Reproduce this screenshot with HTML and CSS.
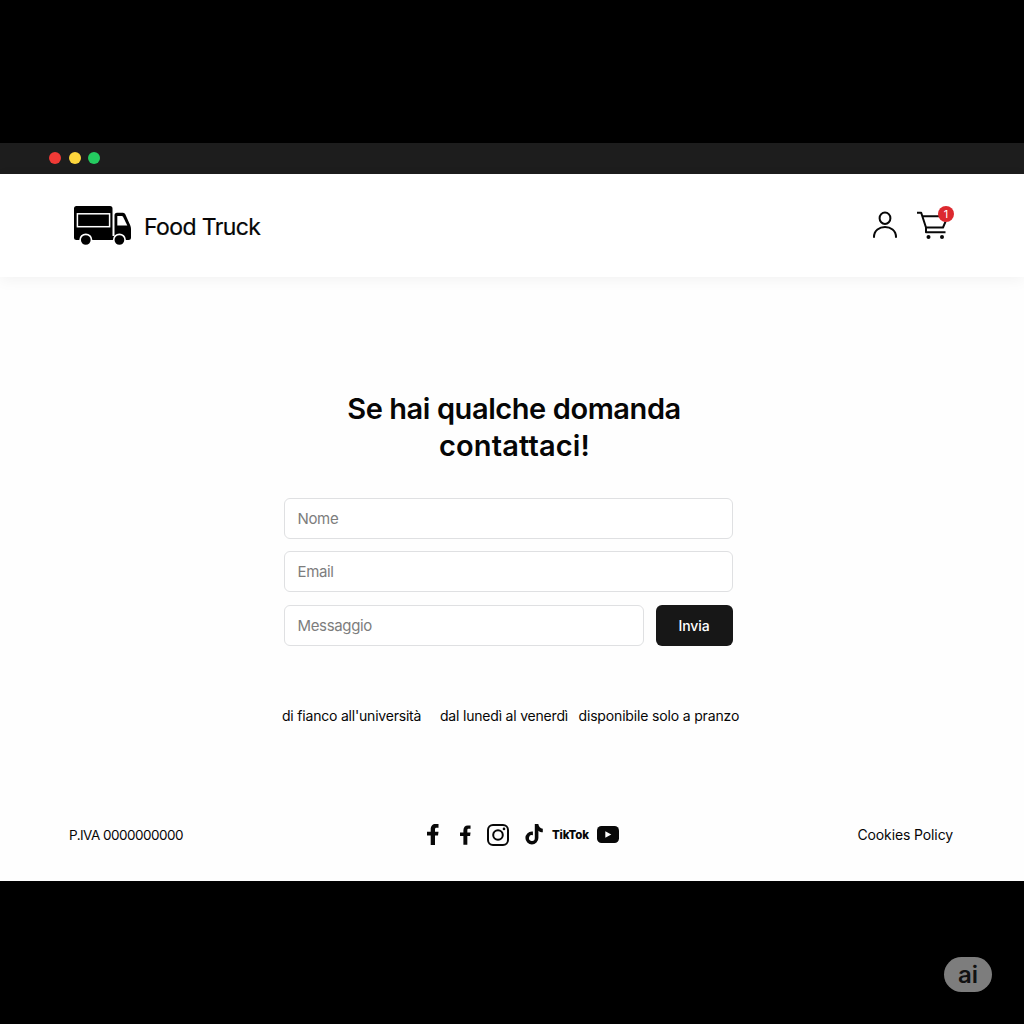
FILE: index.html
```html
<!DOCTYPE html>
<html lang="it">
<head>
<meta charset="utf-8">
<title>Food Truck</title>
<link rel="stylesheet" href="styles.css">
</head>
<body>
<div class="window">
  <div class="titlebar"><span class="dot red"></span><span class="dot yellow"></span><span class="dot green"></span></div>
  <header class="header">
    <a class="brand">
      <svg class="truck" viewBox="0 0 57 40">
        <path d="M2.500 0H36a2.500 2.500 0 0 1 2.500 2.500V34H2.500A2.500 2.500 0 0 1 0 31.500v-29A2.500 2.500 0 0 1 2.500 0z"/>
        <path d="M38 30h2.500V9.200a2.500 2.500 0 0 1 2.500-2.500H49a2.500 2.500 0 0 1 2.300 1.600l5 11.200q.7 1.600.7 3.500v8.500a2.500 2.500 0 0 1-2.500 2.500H38z"/>
        <path d="M43.300 10h4.500q.8 0 1.200.8l4.300 8.700H43.300z" fill="#fff"/>
        <rect x="3.400" y="7.800" width="32.200" height="12.900" fill="none" stroke="#fff" stroke-width="1.500"/>
        <g stroke="#fff" stroke-width="1.700"><circle cx="11.800" cy="34" r="5.700"/><circle cx="45.400" cy="34" r="5.700"/></g>
      </svg>
      <span class="brand-name">Food Truck</span>
    </a>
    <div class="actions">
      <svg class="user" viewBox="0 0 26 28"><ellipse cx="13" cy="7.200" rx="5.400" ry="5.700"/><path d="M2 26C2 12.700 24 12.700 24 26"/></svg>
      <div class="cart-wrap">
        <svg class="cart" viewBox="0 0 32 30"><path d="M0 1.700h4.200L9 16.500v4.800h19.500M6 5.200h20M8.500 16.500h17.500l2.500-5.800"/><g class="wheels"><circle cx="11.500" cy="26" r="2"/><circle cx="25" cy="26" r="2"/></g></svg>
        <span class="badge">1</span>
      </div>
    </div>
  </header>
  <main class="main">
    <h1 class="title"><span class="line1">Se hai qualche domanda</span><br><span class="line2">contattaci!</span></h1>
    <form class="form">
      <div class="field nome"><span>Nome</span></div>
      <div class="field email"><span>Email</span></div>
      <div class="row"><div class="field message"><span>Messaggio</span></div><div class="send"><span>Invia</span></div></div>
    </form>
    <div class="info"><span class="place">di fianco all'università</span><span class="days">dal lunedì al venerdì</span><span class="time">disponibile solo a pranzo</span></div>
  </main>
  <footer class="footer">
    <span class="vat">P.IVA 0000000000</span>
    <div class="social">
      <svg class="fb" viewBox="0 0 12 21"><path d="M3.700 21v-9.500H0V7.800h3.700V5.500C3.700 2 5.500 0 8.500 0H11.500v3.800H9.500c-1 0-1.500.5-1.500 1.500v2.500H11.500l-.5 3.700H8V21z"/></svg>
      <svg class="fb small" viewBox="0 0 12 21"><path d="M3.700 21v-9.500H0V7.800h3.700V5.500C3.700 2 5.500 0 8.500 0H11.500v3.800H9.500c-1 0-1.500.5-1.500 1.500v2.500H11.500l-.5 3.700H8V21z"/></svg>
      <svg class="insta" viewBox="0 0 22 22"><rect x="1" y="1" width="20" height="20" rx="5"/><circle cx="11" cy="11" r="4.800"/><circle class="lens" cx="17" cy="4.900" r="1.300"/></svg>
      <svg class="tiktok" viewBox="0 0 18 21"><path d="M9.800 0h3.500c.4 2.600 2 4.300 4.500 4.700v3.500c-1.700 0-3.200-.5-4.400-1.500V14a6.500 6.500 0 1 1-6.500-6.500l1 .1v3.700a2.900 2.900 0 1 0 1.900 2.700z"/></svg>
      <span class="tiktok-name">TikTok</span>
      <svg class="youtube" viewBox="0 0 22 17"><rect width="22" height="17" rx="4.500"/><path d="M8.300 5.300v6.400l6-3.200z" fill="#fff"/></svg>
    </div>
    <span class="cookies">Cookies Policy</span>
  </footer>
</div>
<span class="ai">ai</span>
</body>
</html>
```
FILE: styles.css
```css
* { box-sizing: border-box; }
body { margin: 0; width: 1024px; height: 1024px; background: #000; padding-top: 143px; font-family: Inter, sans-serif; color: #060606; overflow: hidden; position: relative; }
.window { height: 738px; background: #fefefe; display: flex; flex-direction: column; }
.titlebar { height: 31px; flex: none; background: #1d1d1d; display: flex; align-items: center; padding: 0 0 1px 49px; gap: 7.500px; }
.dot { width: 12px; height: 12px; border-radius: 50%; }
.red { background: #f03a36; }
.yellow { background: #fdd63c; }
.green { background: #24cb60; }
.header { height: 103px; flex: none; background: #fff; box-shadow: 0 3px 14px rgba(0,0,0,.05); display: flex; justify-content: space-between; align-items: center; padding: 0 70px 0 74px; }
.brand { display: flex; align-items: center; gap: 13px; }
.truck { width: 57px; height: 40px; }
.brand-name { font-size: 23px; line-height: 28px; letter-spacing: -.62px; margin-top: 2px; -webkit-text-stroke: .2px; }
.actions { display: flex; gap: 19px; }
.user { width: 26px; height: 28px; fill: none; stroke: #080808; stroke-width: 2; stroke-linecap: round; }
.cart-wrap { position: relative; width: 37px; height: 30px; }
.cart { width: 32px; height: 30px; fill: none; stroke: #080808; stroke-width: 2; stroke-linejoin: round; }
.wheels { fill: #080808; stroke: none; }
.badge { position: absolute; left: 21px; top: -5px; width: 16px; height: 16px; border-radius: 50%; background: #dc292f; color: #fff; font-size: 11px; line-height: 16px; text-align: center; }
.main { flex: 1; display: flex; flex-direction: column; align-items: center; padding-top: 113px; }
.title { margin: 0 0 34px 4px; font-size: 29px; line-height: 37px; font-weight: 600; text-align: center; white-space: nowrap; }
.line1 { letter-spacing: -.42px; }
.line2 { letter-spacing: .15px; margin-left: 1px; }
.form { width: 449px; margin-right: 8px; display: flex; flex-direction: column; gap: 12.400px; }
.field { height: 41px; border: 1px solid #dfe0e2; border-radius: 6px; background: #fff; padding-left: 13px; display: flex; align-items: center; font-size: 15px; letter-spacing: -.35px; color: #7d7d7d; }
.row { display: flex; gap: 12px; }
.message { width: 360px; }
.send { width: 77px; height: 41px; border-radius: 6px; background: #171717; color: #fff; display: flex; align-items: center; justify-content: center; font-size: 14px; font-weight: 500; letter-spacing: -.1px; }
.info { width: 458px; margin: 60px 2px 0 0; display: flex; font-size: 14px; line-height: 20px; letter-spacing: -.2px; white-space: nowrap; }
.place { width: 158px; }
.days { width: 138.500px; }
.time { letter-spacing: -.16px; }
.footer { height: 93px; flex: none; display: grid; grid-template-columns: 358px auto 1fr; align-items: center; padding: 0 71px 0 69px; font-size: 14px; }
.vat { font-size: 13.500px; letter-spacing: -.52px; }
.cookies { justify-self: end; letter-spacing: -.12px; }
.social { display: flex; align-items: center; }
.social svg { fill: #080808; }
.fb { width: 12px; height: 21px; margin-right: 21px; }
.fb.small { width: 11px; height: 20px; margin-right: 16px; }
.social .insta { width: 22px; height: 22px; fill: none; stroke: #080808; stroke-width: 2; margin-right: 16px; }
.social .insta .lens { fill: #080808; stroke: none; }
.tiktok { width: 18px; height: 21px; margin-right: 9px; }
.tiktok-name { font-size: 11.500px; font-weight: 800; letter-spacing: -.2px; margin-right: 8px; }
.youtube { width: 22px; height: 17px; }
.ai { position: absolute; left: 944px; top: 957px; width: 48px; height: 35px; border-radius: 17.500px; background: #7d7d7d; color: #111; font-size: 24px; font-weight: 600; line-height: 35px; text-align: center; }
```
